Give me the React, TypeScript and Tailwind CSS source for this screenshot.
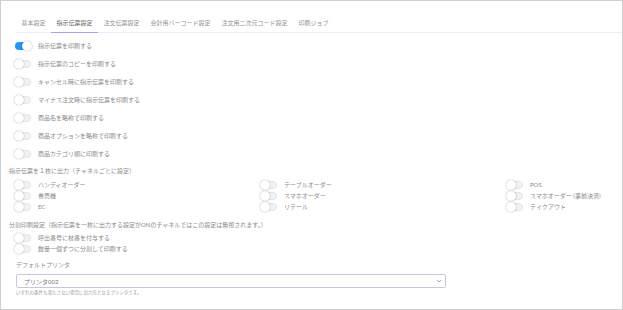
import React from "react";

function Toggle({ on = false }: { on?: boolean }) {
  return (
    <div className="relative w-[16px] h-[10px] shrink-0">
      <div
        className={
          "absolute left-0 right-0 top-[1px] h-[8px] rounded-full " +
          (on ? "bg-[#2196f3]" : "bg-[#f1f2f5] border border-[#e3e5ea]")
        }
      />
      <div
        className={
          "absolute top-0 w-[10px] h-[10px] rounded-full bg-white shadow-[0_0_1.5px_rgba(0,0,0,0.4)] " +
          (on ? "right-[-1px]" : "left-[-1px]")
        }
      />
    </div>
  );
}

const tabs = [
  "基本設定",
  "指示伝票設定",
  "注文伝票設定",
  "会計用バーコード設定",
  "注文用二次元コード設定",
  "印刷ジョブ",
];

const mainToggles = [
  "指示伝票を印刷する",
  "指示伝票のコピーを印刷する",
  "キャンセル時に指示伝票を印刷する",
  "マイナス注文時に指示伝票を印刷する",
  "商品名を略称で印刷する",
  "商品オプションを略称で印刷する",
  "商品カテゴリ順に印刷する",
];

const channels = [
  "ハンディオーダー",
  "テーブルオーダー",
  "POS",
  "券売機",
  "スマホオーダー",
  "スマホオーダー (事前決済)",
  "EC",
  "リテール",
  "テイクアウト",
];

export default function App() {
  return (
    <div
      className="w-[623px] h-[310px] bg-white border border-[#cfcfcf] overflow-hidden text-[#8a8a8a]"
      style={{ fontFamily: 'Lato, "Noto Sans CJK JP", sans-serif' }}
    >
      {/* tabs */}
      <div className="ml-[15px] mt-[12px] flex border-b border-[#eceef8] text-[6px] leading-[8px]">
        {tabs.map((t, i) => (
          <div
            key={t}
            className={
              "px-[5.5px] pt-[6px] pb-[5px] border-b " +
              (i === 1 ? "border-[#aaa4ea] text-[#666]" : "border-transparent text-[#939393]")
            }
            style={{ marginBottom: -1 }}
          >
            {t}
          </div>
        ))}
      </div>

      {/* main toggles */}
      <div className="ml-[14px] mt-[8px] flex flex-col gap-[8px] text-[6px] leading-[10px]">
        {mainToggles.map((t, i) => (
          <div key={t} className="flex items-center gap-[7px]">
            <Toggle on={i === 0} />
            <span>{t}</span>
          </div>
        ))}
      </div>

      <div className="ml-[8px] mt-[8px] text-[6px] leading-[8px]">
        指示伝票を１枚に出力（チャネルごとに設定）
      </div>
      <div className="ml-[14px] mt-[5px] grid grid-cols-[246px_246px_1fr] gap-y-[1px] text-[6px] leading-[10px]">
        {channels.map((c) => (
          <div key={c} className="flex items-center gap-[7px]">
            <Toggle />
            <span>{c}</span>
          </div>
        ))}
      </div>

      <div className="ml-[8px] mt-[9px] text-[6px] leading-[8px]">
        分割印刷設定（指示伝票を一枚に出力する設定がONのチャネルではこの設定は無視されます。）
      </div>
      <div className="ml-[14px] mt-[4px] flex flex-col gap-[1px] text-[6px] leading-[10px]">
        {["呼出番号に枝番を付与する", "数量一個ずつに分割して印刷する"].map((t) => (
          <div key={t} className="flex items-center gap-[7px]">
            <Toggle />
            <span>{t}</span>
          </div>
        ))}
      </div>

      <div className="ml-[15px] mt-[7px] text-[6px] leading-[8px]">デフォルトプリンタ</div>
      <div className="ml-[15px] mt-[5px] w-[430px] h-[14px] border border-[#c9c5dd] rounded-[2px] flex items-center justify-between pl-[7px] pr-[3px] text-[6px] text-[#777]">
        <span>プリンタ002</span>
        <svg width="6" height="6" viewBox="0 0 10 10" className="text-[#888]">
          <path d="M2 3.5 L5 6.5 L8 3.5" fill="none" stroke="currentColor" strokeWidth="1.4" />
        </svg>
      </div>
      <div className="ml-[15px] mt-[2px] text-[4.5px] leading-[6px] text-[#999]">
        いずれの条件も満たさない場合に出力先となるプリンタです。
      </div>
    </div>
  );
}
